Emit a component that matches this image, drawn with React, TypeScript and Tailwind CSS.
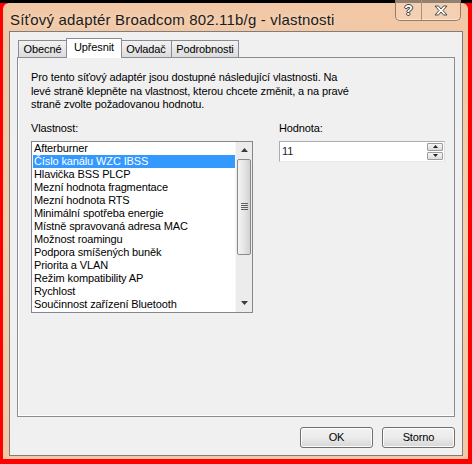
import React from 'react'

// Vista-style "properties" dialog for a Wi-Fi adapter, Advanced tab
const properties = [
  'Afterburner',
  'Číslo kanálu WZC IBSS',
  'Hlavička BSS PLCP',
  'Mezní hodnota fragmentace',
  'Mezní hodnota RTS',
  'Minimální spotřeba energie',
  'Místně spravovaná adresa MAC',
  'Možnost roamingu',
  'Podpora smíšených buněk',
  'Priorita a VLAN',
  'Režim kompatibility AP',
  'Rychlost',
  'Součinnost zařízení Bluetooth',
]

const tabs = [
  { label: 'Obecné', w: 'w-[49px]' },
  { label: 'Upřesnit', w: 'w-[56px]', active: true },
  { label: 'Ovladač', w: 'w-[51px]' },
  { label: 'Podrobnosti', w: 'w-[67px]' },
]

function ArrowUpSmall() {
  return (
    <svg width="7" height="4" viewBox="0 0 7 4">
      <path d="M3.5 0 L7 4 L0 4 Z" fill="#3c3c3c" />
    </svg>
  )
}

function ArrowDownSmall() {
  return (
    <svg width="7" height="4" viewBox="0 0 7 4">
      <path d="M0 0 L7 0 L3.5 4 Z" fill="#3c3c3c" />
    </svg>
  )
}

function CloseGlyph() {
  return (
    <svg width="14" height="11" viewBox="0 0 14 11">
      <path
        d="M1 1 H4.5 L7 4 L9.5 1 H13 L9 5.5 L13 10 H9.5 L7 7 L4.5 10 H1 L5 5.5 Z"
        fill="#ffffff"
        stroke="#4a4a4a"
        strokeWidth="1"
        strokeLinejoin="round"
      />
    </svg>
  )
}

export default function App() {
  return (
    <div className="w-[472px] h-[464px] bg-[#ff0000] border-t-[3px] border-black pl-[3px] pr-[4px] pb-[5px] flex font-['Liberation_Sans',Arial,sans-serif] text-[11px] tracking-[-0.12px] text-black">
      {/* Window frame */}
      <div className="flex-1 flex flex-col rounded-t-[6px] bg-gradient-to-b from-[#f1c7a5] via-[#f5cfae] to-[#f3c8a6] pl-[6px] pr-[5px] pb-[3px]">
        {/* Title bar */}
        <div className="h-[28px] flex items-start justify-between">
          <div className="pl-[1px] pt-[8px] text-[15px] leading-[17px] tracking-[0.18px] text-[#1b1b1b] [text-shadow:0_0_6px_#fbe3cf]">
            Síťový adaptér Broadcom 802.11b/g - vlastnosti
          </div>
          <div className="-mt-[3px] mr-[2px] flex h-[21px] rounded-b-[5px] border border-t-0 border-[#9a7a62] bg-[#f6d5ba]/60 shadow-[inset_0_-1px_0_#fbe6d5]">
            <div className="w-[26px] flex items-center justify-center border-r border-[#b08f76] text-[14px] font-bold text-white [text-shadow:0_0_1px_#333,1px_0_0_#444,-1px_0_0_#444,0_1px_0_#444,0_-1px_0_#444]">
              ?
            </div>
            <div className="w-[38px] flex items-center justify-center">
              <CloseGlyph />
            </div>
          </div>
        </div>

        {/* Client area */}
        <div className="flex-1 flex flex-col border border-[#7d7d7d] bg-[#f0f0f0] pl-[7px] pr-[7px] pt-[6px] pb-[7px]">
          {/* Tabs */}
          <div className="flex items-end pl-[1px] relative z-10">
            {tabs.map((t) =>
              t.active ? (
                <div
                  key={t.label}
                  className={`${t.w} h-[20px] -mb-px -mx-px relative border border-b-0 border-[#898c95] bg-white flex items-start justify-center pt-[2px] leading-[13px]`}
                >
                  {t.label}
                </div>
              ) : (
                <div
                  key={t.label}
                  className={`${t.w} h-[17px] border border-b-0 border-l-0 first:border-l border-[#898c95] bg-gradient-to-b from-[#f2f2f2] to-[#dcdcdc] flex items-center justify-center leading-[13px]`}
                >
                  {t.label}
                </div>
              )
            )}
          </div>

          {/* Tab page */}
          <div className="flex-1 border border-[#898c95] bg-[#f0f0f0] shadow-[inset_1px_-1px_0_#ffffff] pl-[13px] pt-[13px]">
            <p className="leading-[13.5px] whitespace-nowrap">
              Pro tento síťový adaptér jsou dostupné následující vlastnosti. Na
              <br />
              levé straně klepněte na vlastnost, kterou chcete změnit, a na pravé
              <br />
              straně zvolte požadovanou hodnotu.
            </p>

            <div className="flex gap-[26px] mt-[10px]">
              {/* Property list */}
              <div className="w-[222px]">
                <div className="leading-[13px] mb-[6px]">Vlastnost:</div>
                <div className="h-[172px] flex border border-[#828790] bg-white">
                  <div className="flex-1 pl-[1px]">
                    {properties.map((p, i) => (
                      <div
                        key={p}
                        className={`h-[13px] leading-[13px] pl-[1px] whitespace-nowrap ${
                          i === 1 ? 'bg-[#3399ff] text-white' : ''
                        }`}
                      >
                        {p}
                      </div>
                    ))}
                  </div>
                  {/* Scrollbar */}
                  <div className="w-[17px] flex flex-col bg-[#ececec] border-l border-[#f7f7f7]">
                    <div className="h-[17px] flex items-center justify-center">
                      <ArrowUpSmall />
                    </div>
                    <div className="h-[96px] mx-[1px] rounded-[2px] border border-[#8a8a8a] bg-gradient-to-r from-[#f4f4f4] via-[#e6e6e6] to-[#d2d2d2] flex flex-col items-center justify-center gap-[1px]">
                      <div className="w-[7px] h-px bg-[#5f5f5f]" />
                      <div className="w-[7px] h-px bg-[#5f5f5f]" />
                      <div className="w-[7px] h-px bg-[#5f5f5f]" />
                      <div className="w-[7px] h-px bg-[#5f5f5f]" />
                    </div>
                    <div className="flex-1" />
                    <div className="h-[17px] flex items-center justify-center">
                      <ArrowDownSmall />
                    </div>
                  </div>
                </div>
              </div>

              {/* Value */}
              <div className="w-[166px]">
                <div className="leading-[13px] mb-[6px]">Hodnota:</div>
                <div className="h-[21px] flex items-center border border-[#abadb3] border-r-[#dbdfe6] border-b-[#e3e9ef] bg-white pl-[2px] pr-[1px]">
                  <div className="flex-1 text-[#2a1a33]">11</div>
                  <div className="w-[16px] flex flex-col gap-[1px]">
                    <div className="h-[8px] flex items-center justify-center rounded-[1px] border border-[#9c9c9c] bg-gradient-to-b from-[#f6f6f6] to-[#dcdcdc]">
                      <svg width="5" height="3" viewBox="0 0 5 3">
                        <path d="M2.5 0 L5 3 L0 3 Z" fill="#222" />
                      </svg>
                    </div>
                    <div className="h-[8px] flex items-center justify-center rounded-[1px] border border-[#9c9c9c] bg-gradient-to-b from-[#f6f6f6] to-[#dcdcdc]">
                      <svg width="5" height="3" viewBox="0 0 5 3">
                        <path d="M0 0 L5 0 L2.5 3 Z" fill="#222" />
                      </svg>
                    </div>
                  </div>
                </div>
              </div>
            </div>
          </div>

          {/* Dialog buttons */}
          <div className="flex justify-end gap-[9px] mt-[10px]">
            {['OK', 'Storno'].map((b) => (
              <button
                key={b}
                className="w-[73px] h-[21px] rounded-[3px] border border-[#707070] bg-gradient-to-b from-[#f2f2f2] via-[#ebebeb] to-[#d6d6d6] shadow-[inset_0_0_0_1px_#fcfcfc] text-[11px] leading-[13px]"
              >
                {b}
              </button>
            ))}
          </div>
        </div>
      </div>
    </div>
  )
}
